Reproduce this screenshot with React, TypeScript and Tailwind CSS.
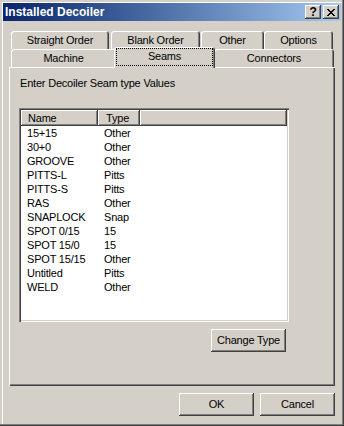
const seams = [
  ["15+15", "Other"],
  ["30+0", "Other"],
  ["GROOVE", "Other"],
  ["PITTS-L", "Pitts"],
  ["PITTS-S", "Pitts"],
  ["RAS", "Other"],
  ["SNAPLOCK", "Snap"],
  ["SPOT 0/15", "15"],
  ["SPOT 15/0", "15"],
  ["SPOT 15/15", "Other"],
  ["Untitled", "Pitts"],
  ["WELD", "Other"],
];

const raised =
  "shadow-[inset_-1px_-1px_0_#404040,inset_1px_1px_0_#fff,inset_-2px_-2px_0_#808080]";
const tab =
  "flex items-center justify-center pt-[1px] rounded-t-[3px] bg-[#d4d0c8] shadow-[inset_1px_1px_0_#fff,inset_-1px_0_0_#404040,inset_-2px_0_0_#808080]";

function CloseGlyph() {
  const px = [
    [0, 0], [1, 0], [6, 0], [7, 0],
    [1, 1], [2, 1], [5, 1], [6, 1],
    [2, 2], [3, 2], [4, 2], [5, 2],
    [3, 3], [4, 3],
    [2, 4], [3, 4], [4, 4], [5, 4],
    [1, 5], [2, 5], [5, 5], [6, 5],
    [0, 6], [1, 6], [6, 6], [7, 6],
  ];
  return (
    <svg width="8" height="7" viewBox="0 0 8 7" shapeRendering="crispEdges">
      {px.map(([x, y]) => (
        <rect key={`${x}-${y}`} x={x} y={y} width="1" height="1" fill="#000" />
      ))}
    </svg>
  );
}

function Button({ label }: { label: string }) {
  return (
    <button className={`w-[75px] h-[23px] bg-[#d4d0c8] ${raised} flex items-center justify-center`}>
      {label}
    </button>
  );
}

export default function App() {
  return (
    <div
      className="w-[344px] h-[426px] bg-[#d4d0c8] flex flex-col p-[3px] text-black text-[11px] tracking-[-0.2px] font-['Liberation_Sans',Arial,sans-serif] shadow-[inset_-1px_-1px_0_#404040,inset_-2px_-2px_0_#808080,inset_2px_2px_0_#d4d0c8,inset_3px_3px_0_#fff]"
    >
      {/* title bar */}
      <div className="h-[18px] flex items-center bg-linear-to-r from-[#0a246a] to-[#a6caf0] pl-[2px] pr-[2px]">
        <span className="text-white font-bold text-[12px] tracking-normal">Installed Decoiler</span>
        <div className="ml-auto flex gap-[2px]">
          <div className={`w-[16px] h-[14px] bg-[#d4d0c8] ${raised} flex items-center justify-center font-bold text-[12px] leading-none pb-[1px]`}>
            ?
          </div>
          <div className={`w-[16px] h-[14px] bg-[#d4d0c8] ${raised} flex items-center justify-center`}>
            <CloseGlyph />
          </div>
        </div>
      </div>

      <div className="flex flex-col px-[6px] pt-[10px]">
        {/* back row of tabs */}
        <div className="flex h-[18px]">
          <div className={`${tab} ml-[2px] w-[98px]`}>Straight Order</div>
          <div className={`${tab} ml-[2px] w-[89px]`}>Blank Order</div>
          <div className={`${tab} ml-[1px] w-[63px]`}>Other</div>
          <div className={`${tab} w-[69px]`}>Options</div>
        </div>

        {/* front row of tabs */}
        <div className="flex items-end h-[18px]">
          <div className={`${tab} ml-[2px] w-[105px] h-[18px]`}>Machine</div>
          <div className={`${tab} relative z-10 -ml-[2px] w-[101px] h-[21px] -mb-[1px] pb-[3px]`}>
            <div className="absolute left-[2px] right-[2px] top-[1px] bottom-[2px] border border-dotted border-black" />
            Seams
          </div>
          <div className={`${tab} -ml-[1px] w-[120px] h-[18px]`}>Connectors</div>
        </div>

        {/* page */}
        <div className="w-[326px] h-[319px] flex flex-col pl-[10px] pt-[9px] shadow-[inset_1px_1px_0_#fff,inset_-1px_-1px_0_#404040,inset_-2px_-2px_0_#808080]">
          <p className="ml-[1px] leading-[14px]">Enter Decoiler Seam type Values</p>

          <div className="mt-[18px] w-[270px] h-[214px] bg-white p-[2px] overflow-hidden shadow-[inset_1px_1px_0_#808080,inset_2px_2px_0_#404040,inset_-1px_-1px_0_#fff,inset_-2px_-2px_0_#d4d0c8]">
            <div className="flex h-[16px] bg-[#d4d0c8]">
              <div className={`w-[77px] pl-[7px] flex items-center ${raised}`}>Name</div>
              <div className={`w-[42px] pl-[8px] flex items-center ${raised}`}>Type</div>
              <div className={`flex-1 ${raised}`} />
            </div>
            {seams.map(([name, type]) => (
              <div key={name} className="flex h-[14px] leading-[14px]">
                <span className="w-[77px] pl-[6px]">{name}</span>
                <span className="pl-[6px]">{type}</span>
              </div>
            ))}
          </div>

          <div className="w-[270px] mt-[7px] flex justify-end pr-[3px]">
            <Button label="Change Type" />
          </div>
        </div>

        <div className="mt-[7px] flex justify-end gap-[6px]">
          <Button label="OK" />
          <Button label="Cancel" />
        </div>
      </div>
    </div>
  );
}
